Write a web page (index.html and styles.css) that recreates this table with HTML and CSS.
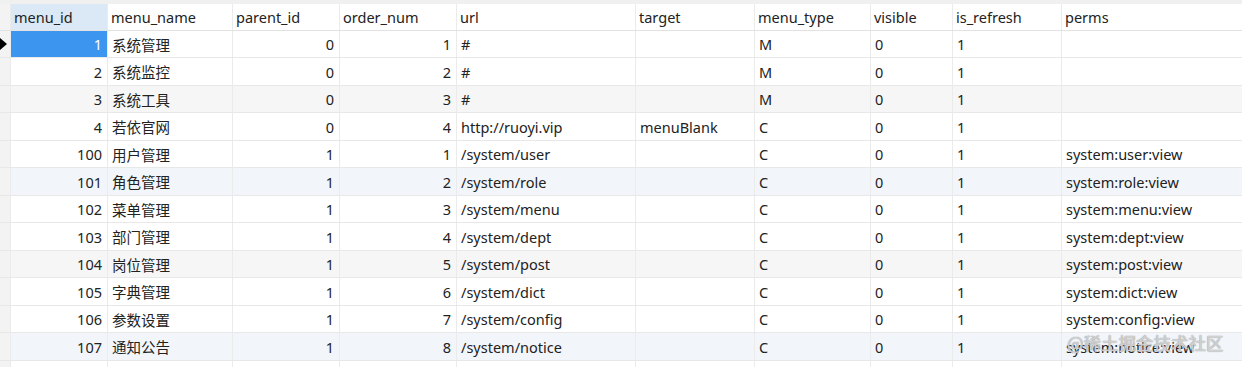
FILE: index.html
```html
<!DOCTYPE html>
<html lang="zh-CN">
<head>
<meta charset="utf-8">
<title>sys_menu</title>
<link rel="stylesheet" href="styles.css">
</head>
<body>
<div class="grid">
  <div class="topstrip"></div>
  <div class="row head">
    <div class="c ind"></div>
    <div class="c c1 sel-col">menu_id</div>
    <div class="c c2">menu_name</div>
    <div class="c c3">parent_id</div>
    <div class="c c4">order_num</div>
    <div class="c c5">url</div>
    <div class="c c6">target</div>
    <div class="c c7">menu_type</div>
    <div class="c c8">visible</div>
    <div class="c c9">is_refresh</div>
    <div class="c c10">perms</div>
  </div>
  <div class="row">
    <div class="c ind"><span class="arrow"></span></div>
    <div class="c c1 num selected">1</div>
    <div class="c c2">系统管理</div>
    <div class="c c3 num">0</div>
    <div class="c c4 num">1</div>
    <div class="c c5">#</div>
    <div class="c c6"></div>
    <div class="c c7">M</div>
    <div class="c c8">0</div>
    <div class="c c9">1</div>
    <div class="c c10"></div>
  </div>
  <div class="row">
    <div class="c ind"></div>
    <div class="c c1 num">2</div>
    <div class="c c2">系统监控</div>
    <div class="c c3 num">0</div>
    <div class="c c4 num">2</div>
    <div class="c c5">#</div>
    <div class="c c6"></div>
    <div class="c c7">M</div>
    <div class="c c8">0</div>
    <div class="c c9">1</div>
    <div class="c c10"></div>
  </div>
  <div class="row gray">
    <div class="c ind"></div>
    <div class="c c1 num">3</div>
    <div class="c c2">系统工具</div>
    <div class="c c3 num">0</div>
    <div class="c c4 num">3</div>
    <div class="c c5">#</div>
    <div class="c c6"></div>
    <div class="c c7">M</div>
    <div class="c c8">0</div>
    <div class="c c9">1</div>
    <div class="c c10"></div>
  </div>
  <div class="row">
    <div class="c ind"></div>
    <div class="c c1 num">4</div>
    <div class="c c2">若依官网</div>
    <div class="c c3 num">0</div>
    <div class="c c4 num">4</div>
    <div class="c c5">http://ruoyi.vip</div>
    <div class="c c6">menuBlank</div>
    <div class="c c7">C</div>
    <div class="c c8">0</div>
    <div class="c c9">1</div>
    <div class="c c10"></div>
  </div>
  <div class="row">
    <div class="c ind"></div>
    <div class="c c1 num">100</div>
    <div class="c c2">用户管理</div>
    <div class="c c3 num">1</div>
    <div class="c c4 num">1</div>
    <div class="c c5">/system/user</div>
    <div class="c c6"></div>
    <div class="c c7">C</div>
    <div class="c c8">0</div>
    <div class="c c9">1</div>
    <div class="c c10">system:user:view</div>
  </div>
  <div class="row blue">
    <div class="c ind"></div>
    <div class="c c1 num">101</div>
    <div class="c c2">角色管理</div>
    <div class="c c3 num">1</div>
    <div class="c c4 num">2</div>
    <div class="c c5">/system/role</div>
    <div class="c c6"></div>
    <div class="c c7">C</div>
    <div class="c c8">0</div>
    <div class="c c9">1</div>
    <div class="c c10">system:role:view</div>
  </div>
  <div class="row">
    <div class="c ind"></div>
    <div class="c c1 num">102</div>
    <div class="c c2">菜单管理</div>
    <div class="c c3 num">1</div>
    <div class="c c4 num">3</div>
    <div class="c c5">/system/menu</div>
    <div class="c c6"></div>
    <div class="c c7">C</div>
    <div class="c c8">0</div>
    <div class="c c9">1</div>
    <div class="c c10">system:menu:view</div>
  </div>
  <div class="row">
    <div class="c ind"></div>
    <div class="c c1 num">103</div>
    <div class="c c2">部门管理</div>
    <div class="c c3 num">1</div>
    <div class="c c4 num">4</div>
    <div class="c c5">/system/dept</div>
    <div class="c c6"></div>
    <div class="c c7">C</div>
    <div class="c c8">0</div>
    <div class="c c9">1</div>
    <div class="c c10">system:dept:view</div>
  </div>
  <div class="row gray">
    <div class="c ind"></div>
    <div class="c c1 num">104</div>
    <div class="c c2">岗位管理</div>
    <div class="c c3 num">1</div>
    <div class="c c4 num">5</div>
    <div class="c c5">/system/post</div>
    <div class="c c6"></div>
    <div class="c c7">C</div>
    <div class="c c8">0</div>
    <div class="c c9">1</div>
    <div class="c c10">system:post:view</div>
  </div>
  <div class="row">
    <div class="c ind"></div>
    <div class="c c1 num">105</div>
    <div class="c c2">字典管理</div>
    <div class="c c3 num">1</div>
    <div class="c c4 num">6</div>
    <div class="c c5">/system/dict</div>
    <div class="c c6"></div>
    <div class="c c7">C</div>
    <div class="c c8">0</div>
    <div class="c c9">1</div>
    <div class="c c10">system:dict:view</div>
  </div>
  <div class="row">
    <div class="c ind"></div>
    <div class="c c1 num">106</div>
    <div class="c c2">参数设置</div>
    <div class="c c3 num">1</div>
    <div class="c c4 num">7</div>
    <div class="c c5">/system/config</div>
    <div class="c c6"></div>
    <div class="c c7">C</div>
    <div class="c c8">0</div>
    <div class="c c9">1</div>
    <div class="c c10">system:config:view</div>
  </div>
  <div class="row blue">
    <div class="c ind"></div>
    <div class="c c1 num">107</div>
    <div class="c c2">通知公告</div>
    <div class="c c3 num">1</div>
    <div class="c c4 num">8</div>
    <div class="c c5">/system/notice</div>
    <div class="c c6"></div>
    <div class="c c7">C</div>
    <div class="c c8">0</div>
    <div class="c c9">1</div>
    <div class="c c10">system:notice:view</div>
  </div>
  <div class="row filler">
    <div class="c ind"></div>
    <div class="c c1"></div>
    <div class="c c2"></div>
    <div class="c c3"></div>
    <div class="c c4"></div>
    <div class="c c5"></div>
    <div class="c c6"></div>
    <div class="c c7"></div>
    <div class="c c8"></div>
    <div class="c c9"></div>
    <div class="c c10"></div>
  </div>
  <div class="watermark">@稀土掘金技术社区</div>
</div>
</body>
</html>
```

FILE: styles.css
```css
html, body {
  margin: 0;
  padding: 0;
  background: #ffffff;
}

body {
  width: 1242px;
  height: 367px;
  overflow: hidden;
  font-family: "Noto Sans", "Noto Sans CJK SC", sans-serif;
  font-size: 14.5px;
  color: #222222;
}

.grid {
  position: relative;
  display: flex;
  flex-direction: column;
  height: 367px;
  overflow: hidden;
}

.topstrip {
  height: 4px;
  background: #f0f0f0;
  flex-shrink: 0;
}

.row {
  display: flex;
  height: 27px;
  box-sizing: border-box;
  border-bottom: 1px solid #e8e8e8;
  flex-shrink: 0;
}

.row:nth-child(even) {
  height: 28px;
}

.row.head {
  height: 27px;
  border-bottom-color: #e2e2e2;
}

.row.filler {
  height: 6px;
  border-bottom: none;
}

.row.gray { background: #f6f6f6; }
.row.blue { background: #f2f6fb; }

.c {
  box-sizing: border-box;
  border-right: 1px solid #ebebeb;
  display: flex;
  align-items: center;
  padding: 0 4px;
  white-space: nowrap;
  overflow: hidden;
  flex-shrink: 0;
}

.c.num {
  justify-content: flex-end;
  padding-right: 5px;
}

.ind { width: 11px; padding: 0; background: #f3f3f3; }
.c1 { width: 97px; }
.c2 { width: 125px; }
.c3 { width: 107px; }
.c4 { width: 117px; }
.c5 { width: 179px; }
.c6 { width: 119px; }
.c7 { width: 116px; }
.c8 { width: 82px; }
.c9 { width: 109px; }
.c10 { width: 180px; border-right: none; }

.head .c { padding-left: 3px; }
.head .sel-col { background: #dbe8f5; }

.selected {
  background: #3c96f0;
  color: #ffffff;
}

.arrow {
  width: 0;
  height: 0;
  border-top: 6px solid transparent;
  border-bottom: 6px solid transparent;
  border-left: 7px solid #000000;
}

.watermark {
  position: absolute;
  left: 1067px;
  top: 330px;
  font-family: "Noto Sans CJK SC", sans-serif;
  font-size: 17.5px;
  color: rgba(255, 255, 255, 0.55);
  text-shadow: 0 0 1px #9a9a9a, 0 0 1px #9a9a9a;
}
```
